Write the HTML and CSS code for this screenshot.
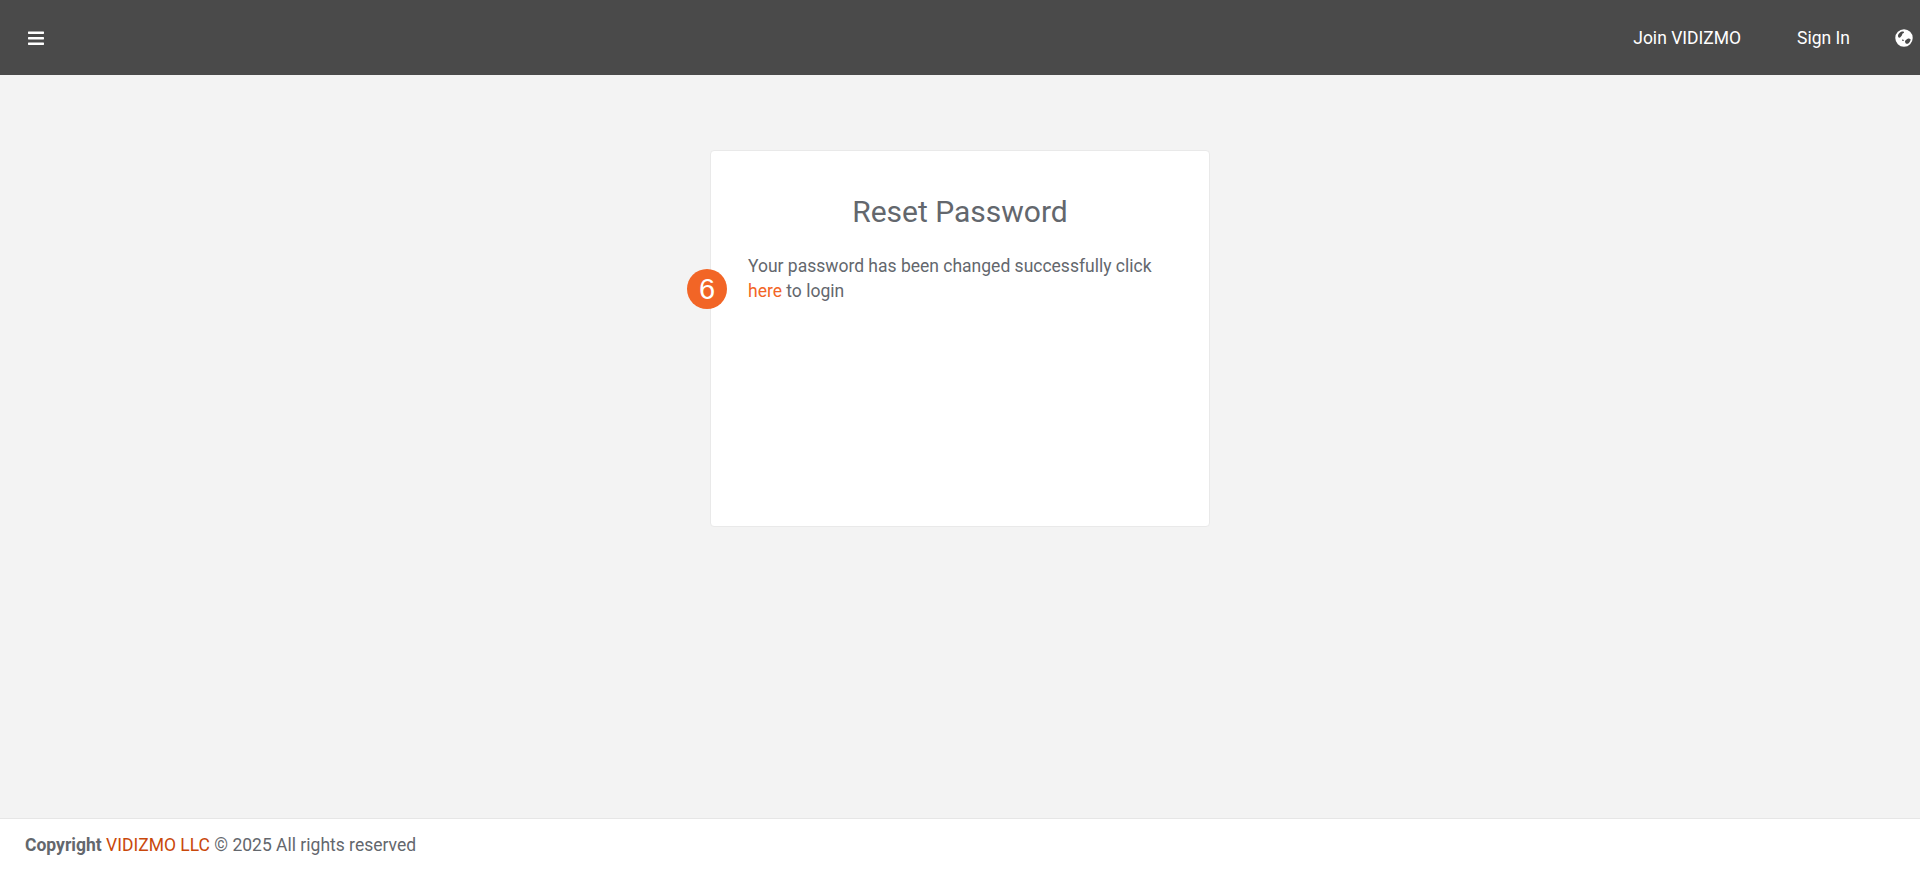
FILE: index.html
```html
<!DOCTYPE html>
<html lang="en">
<head>
<meta charset="utf-8">
<title>Reset Password</title>
<link rel="stylesheet" href="styles.css">
</head>
<body>
<header class="topbar">
  <button class="menu-btn" aria-label="Menu">
    <svg class="menu-icon" viewBox="0 0 16 14" width="16" height="14"><rect x="0" y="0.5" width="16" height="2.4" rx="0.6"/><rect x="0" y="6" width="16" height="2.4" rx="0.6"/><rect x="0" y="11.5" width="16" height="2.4" rx="0.6"/></svg>
  </button>
  <nav class="topnav">
    <a class="nav-link" href="#">Join VIDIZMO</a>
    <a class="nav-link" href="#">Sign In</a>
    <svg class="globe" viewBox="0 0 512 512" width="18" height="18" aria-hidden="true"><path fill-rule="evenodd" d="M256 8a248 248 0 1 0 0 496 248 248 0 0 0 0-496zM120 250c-22-6-40-30-34-70 14-44 60-92 110-106 40-8 64 4 60 28-6 22-40 18-50 44-8 22-14 44-30 62-16 20-32 48-56 42zm90 52c16-8 36 0 42 18 4 16-14 26-32 22-18-6-26-32-10-40zm86 24c26-14 40-46 68-52 30-6 62 0 80 14 0 50-34 100-78 128-36 14-66-6-76-42-6-20-8-38 6-48z"/></svg>
  </nav>
</header>
<main class="page">
  <section class="card">
    <h1 class="card-title">Reset Password</h1>
    <p class="card-text">Your password has been changed successfully click <a class="accent-link" href="#">here</a> to login</p>
    <span class="step-badge">6</span>
  </section>
</main>
<footer class="footer">
  <strong>Copyright</strong> <a class="footer-link" href="#">VIDIZMO LLC</a> © 2025 All rights reserved
</footer>
</body>
</html>
```
FILE: styles.css
```css
* { box-sizing: border-box; }
html, body { height: 100%; }
body {
  margin: 0;
  min-height: 869px;
  display: flex;
  flex-direction: column;
  background: #f3f3f3;
  color: #63676d;
  font: 17.5px/25px Roboto, "Liberation Sans", sans-serif;
  overflow: hidden;
}
a { text-decoration: none; }
.topbar {
  height: 75px;
  flex: none;
  display: flex;
  align-items: center;
  justify-content: space-between;
  background: #4a4a4a;
  color: #fff;
  padding: 0 7px 0 27.5px;
}
.menu-btn {
  display: flex;
  padding: 0;
  border: 0;
  background: none;
}
.menu-icon { fill: #fff; display: block; }
.topnav {
  display: flex;
  align-items: center;
  gap: 56px;
}
.nav-link { color: #fff; padding-top: 1px; }
.globe { fill: #fff; display: block; margin-left: -11px; }
.page {
  flex: 1;
  display: flex;
  justify-content: center;
  align-items: flex-start;
  padding-top: 75px;
}
.card {
  position: relative;
  width: 500px;
  height: 377px;
  padding: 41px 37px;
  background: #fff;
  border: 1px solid #e9e9e9;
  border-radius: 4px;
}
.card-title {
  margin: 0 0 22px;
  text-align: center;
  font-size: 30px;
  font-weight: 400;
  line-height: 40px;
}
.card-text { margin: 0; }
.accent-link { color: #f26526; }
.step-badge {
  position: absolute;
  left: -24px;
  top: 118px;
  width: 40px;
  height: 40px;
  border-radius: 50%;
  background: #f26526;
  color: #fff;
  font: 29px/40px "Liberation Sans", Arial, sans-serif;
  text-align: center;
}
.footer {
  height: 51px;
  flex: none;
  padding: 14px 25px 0;
  background: #fff;
  border-top: 1px solid #e6e6e6;
}
.footer-link { color: #c9480b; }
```
